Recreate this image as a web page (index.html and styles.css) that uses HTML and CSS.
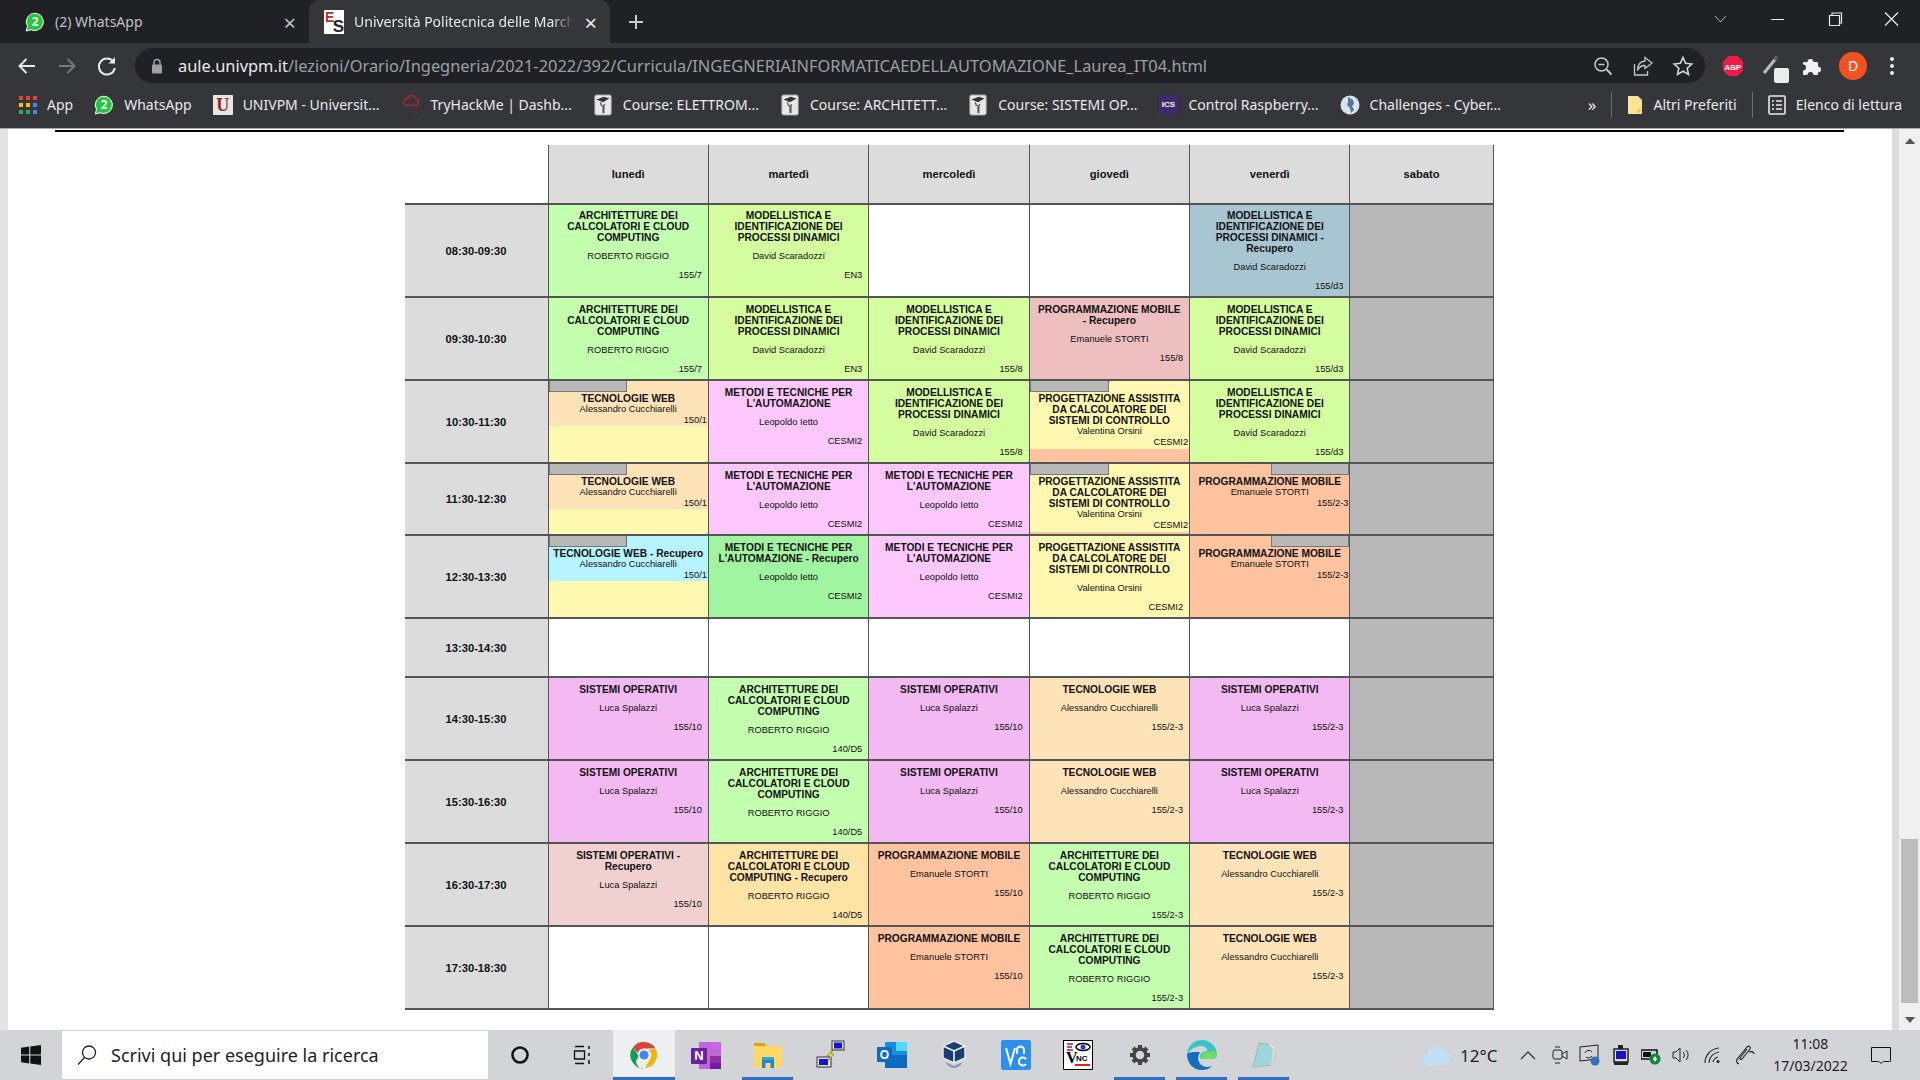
FILE: index.html
```html
<!DOCTYPE html>
<html lang="en">

<head>
  <meta charset="UTF-8">
  <meta name="viewport" content="width=device-width, initial-scale=1.0">
  <title>Orario</title>
  <link rel="stylesheet" href="styles.css">
</head>

<body>

  <svg class="defs" width="0" height="0">
    <symbol id="hat" viewBox="0 0 20 24">
      <rect x="1" y="1" width="18" height="22" rx="2" fill="#e8e8e8" stroke="#9a9a9a"/>
      <path d="M3 6l8-3 6 2-7 4z" fill="#333"/>
      <path d="M7 9l1 3 2 1 0 7 1 0 0-7 1-2" fill="none" stroke="#555" stroke-width="1.300"/>
    </symbol>
  </svg>

  <div class="tabbar">
    <div class="tab">
      <svg class="fav" width="20" height="22" viewBox="0 0 24 24"><path d="M12 1.500a10.400 10.400 0 0 0-9 15.700L1.500 22.800l5.700-1.500A10.400 10.400 0 1 0 12 1.500z" fill="#25c73f" stroke="#fff" stroke-width="1.200"/><text x="12" y="17" class="wa-num">2</text></svg>
      <span class="tab-title">(2) WhatsApp</span>
      <span class="tab-x">×</span>
    </div>
    <div class="tab active">
      <div class="es-logo"><span class="es-e">E</span><span class="es-s">S</span></div>
      <span class="tab-title">Università Politecnica delle March</span>
      <span class="tab-x">×</span>
    </div>
    <svg class="newtab" width="16" height="16" viewBox="0 0 16 16"><path d="M8 1v14M1 8h14" stroke="#c8cacc" stroke-width="2"/></svg>
    <div class="win-btns">
      <svg width="57" height="16" viewBox="0 0 57 16"><path d="M23 5l5.500 6L34 5" fill="none" stroke="#b5b7ba"/></svg>
      <svg width="57" height="16" viewBox="0 0 57 16"><path d="M22 8.500h13" stroke="#e8eaed"/></svg>
      <svg width="57" height="16" viewBox="0 0 57 16"><path d="M23.500 4.500h10v10h-10zM26 4.500V2h9.500v10H33.500" fill="none" stroke="#e8eaed" stroke-width="1.200"/></svg>
      <svg width="57" height="16" viewBox="0 0 57 16"><path d="M22 1.500l13 13M35 1.500l-13 13" stroke="#e8eaed" stroke-width="1.200"/></svg>
    </div>
  </div>

  <div class="toolbar">
    <svg class="nav" width="40" height="24" viewBox="0 0 40 24"><path d="M28 12H13M19.500 5L12.500 12l7 7" fill="none" stroke="#e8eaed" stroke-width="2"/></svg>
    <svg class="nav" width="40" height="24" viewBox="0 0 40 24"><path d="M12 12h15M20.500 5l7 7-7 7" fill="none" stroke="#75777b" stroke-width="2"/></svg>
    <svg class="nav" width="40" height="24" viewBox="0 0 40 24"><path d="M26.500 8a8 8 0 1 0 1.300 6" fill="none" stroke="#e8eaed" stroke-width="2"/><path d="M28 3v6.500h-6.500z" fill="#e8eaed"/></svg>
    <div class="omnibox">
      <svg class="lock" width="12" height="16" viewBox="0 0 12 16"><path d="M3 7V4.500a3 3 0 0 1 6 0V7" fill="none" stroke="#9aa0a6" stroke-width="1.500"/><rect x="1" y="6.500" width="10" height="9" rx="1" fill="#9aa0a6"/></svg>
      <div class="url"><span class="host">aule.univpm.it</span>/lezioni/Orario/Ingegneria/2021-2022/392/Curricula/INGEGNERIAINFORMATICAEDELLAUTOMAZIONE_Laurea_IT04.html</div>
      <div class="omni-icons">
        <svg width="22" height="22" viewBox="0 0 22 22"><circle cx="9.500" cy="9.500" r="6.500" fill="none" stroke="#c4c7cb" stroke-width="1.500"/><path d="M14.500 14.500l5 5" stroke="#c4c7cb" stroke-width="1.800"/><path d="M6.500 9.500h6" stroke="#c4c7cb" stroke-width="1.500"/></svg>
        <svg width="22" height="22" viewBox="0 0 22 22"><path d="M2.500 9v11h13v-4" fill="none" stroke="#c4c7cb" stroke-width="1.300"/><path d="M13 2.500l7 5.500-7 5.500V10.500c-4 0-6 1.500-7.500 5 0-5 2.500-9 7.500-9.500z" fill="none" stroke="#c4c7cb" stroke-width="1.300"/></svg>
        <svg width="22" height="22" viewBox="0 0 22 22"><path d="M11 2.500l2.600 5.800 6.200.7-4.600 4.200 1.300 6.200-5.500-3.200-5.500 3.200 1.300-6.200L2.200 9l6.200-.7z" fill="none" stroke="#d4d6d9" stroke-width="1.600"/></svg>
      </div>
    </div>
    <div class="ext-icons">
      <svg class="ext-abp" width="22" height="22" viewBox="0 0 22 22"><path d="M6.500 1h9L21 6.500v9L15.500 21h-9L1 15.500v-9z" fill="#ee1c46"/><text x="11" y="14.500" class="abp-txt">ABP</text></svg>
      <div class="ext-bat">
        <svg width="26" height="28" viewBox="0 0 26 28"><path d="M1 18L14 2" stroke="#b9bbbe" stroke-width="3"/><path d="M12 5l2-3" stroke="#555" stroke-width="3"/><rect x="11" y="13" width="15" height="15" rx="2" fill="#eceded"/></svg>
      </div>
      <svg class="ext-puzzle" width="22" height="22" viewBox="0 0 22 22"><path d="M3 7h4.500a3 3 0 1 1 6 0H18v4.500a3 3 0 1 1 0 6V20H13.500a3 3 0 1 0-6 0H3v-4.500a3 3 0 1 0 0-6z" fill="#f1f3f4"/></svg>
      <div class="avatar">D</div>
      <div class="menu-dots"><i></i><i></i><i></i></div>
    </div>
  </div>

  <div class="bookmarks">
    <div class="bm"><svg width="18" height="18" viewBox="0 0 18 18"><path d="M0 0h4v4H0z" fill="#ea4335"/><path d="M7 0h4v4H7z" fill="#ea4335"/><path d="M14 0h4v4h-4z" fill="#ea4335"/><path d="M0 7h4v4H0z" fill="#fbbc04"/><path d="M7 7h4v4H7z" fill="#fbbc04"/><path d="M14 7h4v4h-4z" fill="#4285f4"/><path d="M0 14h4v4H0z" fill="#34a853"/><path d="M7 14h4v4H7z" fill="#34a853"/><path d="M14 14h4v4h-4z" fill="#4285f4"/></svg><span>App</span></div>
    <div class="bm"><svg width="20" height="22" viewBox="0 0 24 24"><path d="M12 1.500a10.400 10.400 0 0 0-9 15.700L1.500 22.800l5.700-1.500A10.400 10.400 0 1 0 12 1.500z" fill="#25c73f" stroke="#fff" stroke-width="1.200"/><text x="12" y="17" class="wa-num">2</text></svg><span>WhatsApp</span></div>
    <div class="bm"><div class="u-logo">U</div><span>UNIVPM - Universit...</span></div>
    <div class="bm"><svg width="20" height="22" viewBox="0 0 20 22"><path d="M5 11a3 3 0 0 1 1-6 4.500 4.500 0 0 1 8.500-.5A3.500 3.500 0 0 1 16 11z" fill="none" stroke="#c8202c" stroke-width="1.200"/><path d="M9 13h7v2H9zM11 17h6v2h-6z" fill="#5a2a2c"/></svg><span>TryHackMe | Dashb...</span></div>
    <div class="bm"><svg width="20" height="22"><use href="#hat"/></svg><span>Course: ELETTROM...</span></div>
    <div class="bm"><svg width="20" height="22"><use href="#hat"/></svg><span>Course: ARCHITETT...</span></div>
    <div class="bm"><svg width="20" height="22"><use href="#hat"/></svg><span>Course: SISTEMI OP...</span></div>
    <div class="bm"><div class="ics-logo">ICS</div><span>Control Raspberry...</span></div>
    <div class="bm"><svg width="20" height="22" viewBox="0 0 20 22"><circle cx="10" cy="11" r="9.500" fill="#dbe4ee"/><path d="M8 3l5 3 1 4-2 2 2 4-3 3-1-5-3-3 1-3z" fill="#55779f"/></svg><span>Challenges - Cyber...</span></div>
    <div class="bm-right">
      <span class="more">»</span>
      <i class="bm-sep"></i>
      <div class="bm"><svg width="16" height="20" viewBox="0 0 16 20"><path d="M1 1h10l4 4v14H1z" fill="#fde293"/><path d="M11 19v-5h4z" fill="#f2bd42"/></svg><span>Altri Preferiti</span></div>
      <i class="bm-sep"></i>
      <div class="bm"><svg width="18" height="20" viewBox="0 0 18 20"><rect x="1" y="1" width="16" height="18" rx="1" fill="none" stroke="#e8eaed" stroke-width="1.600"/><path d="M4 6h2M8 6h6M4 10h2M8 10h6M4 14h2M8 14h6" stroke="#e8eaed" stroke-width="1.600"/></svg><span>Elenco di lettura</span></div>
    </div>
  </div>

  <div class="viewport">
    <div class="edge-left"></div>
    <div class="page">
      <div class="rule"></div>
      <table class="orario">
        <colgroup>
          <col class="c-time"><col class="c-day"><col class="c-day"><col class="c-day"><col class="c-day"><col class="c-day"><col class="c-sat">
        </colgroup>
        <tr class="h-head">
          <td class="blank"></td>
          <th>lunedì</th>
          <th>martedì</th>
          <th>mercoledì</th>
          <th>giovedì</th>
          <th>venerdì</th>
          <th>sabato</th>
        </tr>

        <tr class="h-93 first-row">
          <td class="time">08:30-09:30</td>
          <td class="green"><div class="t">ARCHITETTURE DEI CALCOLATORI E CLOUD COMPUTING</div><div class="p">ROBERTO RIGGIO</div><div class="r">155/7</div></td>
          <td class="lime"><div class="t">MODELLISTICA E IDENTIFICAZIONE DEI PROCESSI DINAMICI</div><div class="p">David Scaradozzi</div><div class="r">EN3</div></td>
          <td></td>
          <td></td>
          <td class="steel"><div class="t">MODELLISTICA E IDENTIFICAZIONE DEI PROCESSI DINAMICI - Recupero</div><div class="p">David Scaradozzi</div><div class="r">155/d3</div></td>
          <td class="sat"></td>
        </tr>

        <tr class="h-83">
          <td class="time">09:30-10:30</td>
          <td class="green"><div class="t">ARCHITETTURE DEI CALCOLATORI E CLOUD COMPUTING</div><div class="p">ROBERTO RIGGIO</div><div class="r">155/7</div></td>
          <td class="lime"><div class="t">MODELLISTICA E IDENTIFICAZIONE DEI PROCESSI DINAMICI</div><div class="p">David Scaradozzi</div><div class="r">EN3</div></td>
          <td class="lime"><div class="t">MODELLISTICA E IDENTIFICAZIONE DEI PROCESSI DINAMICI</div><div class="p">David Scaradozzi</div><div class="r">155/8</div></td>
          <td class="rose"><div class="t narrow">PROGRAMMAZIONE MOBILE - Recupero</div><div class="p">Emanuele STORTI</div><div class="r">155/8</div></td>
          <td class="lime"><div class="t">MODELLISTICA E IDENTIFICAZIONE DEI PROCESSI DINAMICI</div><div class="p">David Scaradozzi</div><div class="r">155/d3</div></td>
          <td class="sat"></td>
        </tr>

        <tr class="h-83">
          <td class="time">10:30-11:30</td>
          <td class="yellow"><div class="stack sand"><div class="flag"></div><div class="t">TECNOLOGIE WEB</div><div class="pc">Alessandro Cucchiarelli</div><div class="rc">150/1</div></div></td>
          <td class="violet"><div class="t">METODI E TECNICHE PER L'AUTOMAZIONE</div><div class="p">Leopoldo Ietto</div><div class="r">CESMI2</div></td>
          <td class="lime"><div class="t">MODELLISTICA E IDENTIFICAZIONE DEI PROCESSI DINAMICI</div><div class="p">David Scaradozzi</div><div class="r">155/8</div></td>
          <td class="peach"><div class="stack yellow tail"><div class="flag"></div><div class="t">PROGETTAZIONE ASSISTITA DA CALCOLATORE DEI SISTEMI DI CONTROLLO</div><div class="pc">Valentina Orsini</div><div class="rc">CESMI2</div></div></td>
          <td class="lime"><div class="t">MODELLISTICA E IDENTIFICAZIONE DEI PROCESSI DINAMICI</div><div class="p">David Scaradozzi</div><div class="r">155/d3</div></td>
          <td class="sat"></td>
        </tr>

        <tr class="h-72">
          <td class="time">11:30-12:30</td>
          <td class="yellow"><div class="stack sand"><div class="flag"></div><div class="t">TECNOLOGIE WEB</div><div class="pc">Alessandro Cucchiarelli</div><div class="rc">150/1</div></div></td>
          <td class="violet"><div class="t">METODI E TECNICHE PER L'AUTOMAZIONE</div><div class="p">Leopoldo Ietto</div><div class="r">CESMI2</div></td>
          <td class="violet"><div class="t">METODI E TECNICHE PER L'AUTOMAZIONE</div><div class="p">Leopoldo Ietto</div><div class="r">CESMI2</div></td>
          <td class="peach"><div class="stack yellow tail"><div class="flag"></div><div class="t">PROGETTAZIONE ASSISTITA DA CALCOLATORE DEI SISTEMI DI CONTROLLO</div><div class="pc">Valentina Orsini</div><div class="rc">CESMI2</div></div></td>
          <td class="peach"><div class="stack"><div class="flag right"></div><div class="t">PROGRAMMAZIONE MOBILE</div><div class="pc">Emanuele STORTI</div><div class="rc">155/2-3</div></div></td>
          <td class="sat"></td>
        </tr>

        <tr class="h-83">
          <td class="time">12:30-13:30</td>
          <td class="yellow"><div class="stack sky"><div class="flag"></div><div class="t">TECNOLOGIE WEB - Recupero</div><div class="pc">Alessandro Cucchiarelli</div><div class="rc">150/1</div></div></td>
          <td class="mint"><div class="t">METODI E TECNICHE PER L'AUTOMAZIONE - Recupero</div><div class="p">Leopoldo Ietto</div><div class="r">CESMI2</div></td>
          <td class="violet"><div class="t">METODI E TECNICHE PER L'AUTOMAZIONE</div><div class="p">Leopoldo Ietto</div><div class="r">CESMI2</div></td>
          <td class="yellow"><div class="t">PROGETTAZIONE ASSISTITA DA CALCOLATORE DEI SISTEMI DI CONTROLLO</div><div class="p">Valentina Orsini</div><div class="r">CESMI2</div></td>
          <td class="peach"><div class="stack"><div class="flag right"></div><div class="t">PROGRAMMAZIONE MOBILE</div><div class="pc">Emanuele STORTI</div><div class="rc">155/2-3</div></div></td>
          <td class="sat"></td>
        </tr>

        <tr class="h-59">
          <td class="time">13:30-14:30</td>
          <td></td><td></td><td></td><td></td><td></td>
          <td class="sat"></td>
        </tr>

        <tr class="h-83">
          <td class="time">14:30-15:30</td>
          <td class="purple"><div class="t">SISTEMI OPERATIVI</div><div class="p">Luca Spalazzi</div><div class="r">155/10</div></td>
          <td class="green"><div class="t">ARCHITETTURE DEI CALCOLATORI E CLOUD COMPUTING</div><div class="p">ROBERTO RIGGIO</div><div class="r">140/D5</div></td>
          <td class="purple"><div class="t">SISTEMI OPERATIVI</div><div class="p">Luca Spalazzi</div><div class="r">155/10</div></td>
          <td class="sand"><div class="t">TECNOLOGIE WEB</div><div class="p">Alessandro Cucchiarelli</div><div class="r">155/2-3</div></td>
          <td class="purple"><div class="t">SISTEMI OPERATIVI</div><div class="p">Luca Spalazzi</div><div class="r">155/2-3</div></td>
          <td class="sat"></td>
        </tr>

        <tr class="h-83">
          <td class="time">15:30-16:30</td>
          <td class="purple"><div class="t">SISTEMI OPERATIVI</div><div class="p">Luca Spalazzi</div><div class="r">155/10</div></td>
          <td class="green"><div class="t">ARCHITETTURE DEI CALCOLATORI E CLOUD COMPUTING</div><div class="p">ROBERTO RIGGIO</div><div class="r">140/D5</div></td>
          <td class="purple"><div class="t">SISTEMI OPERATIVI</div><div class="p">Luca Spalazzi</div><div class="r">155/10</div></td>
          <td class="sand"><div class="t">TECNOLOGIE WEB</div><div class="p">Alessandro Cucchiarelli</div><div class="r">155/2-3</div></td>
          <td class="purple"><div class="t">SISTEMI OPERATIVI</div><div class="p">Luca Spalazzi</div><div class="r">155/2-3</div></td>
          <td class="sat"></td>
        </tr>

        <tr class="h-83">
          <td class="time">16:30-17:30</td>
          <td class="blush"><div class="t narrow">SISTEMI OPERATIVI - Recupero</div><div class="p">Luca Spalazzi</div><div class="r">155/10</div></td>
          <td class="gold"><div class="t">ARCHITETTURE DEI CALCOLATORI E CLOUD COMPUTING - Recupero</div><div class="p">ROBERTO RIGGIO</div><div class="r">140/D5</div></td>
          <td class="peach"><div class="t">PROGRAMMAZIONE MOBILE</div><div class="p">Emanuele STORTI</div><div class="r">155/10</div></td>
          <td class="green"><div class="t">ARCHITETTURE DEI CALCOLATORI E CLOUD COMPUTING</div><div class="p">ROBERTO RIGGIO</div><div class="r">155/2-3</div></td>
          <td class="sand"><div class="t">TECNOLOGIE WEB</div><div class="p">Alessandro Cucchiarelli</div><div class="r">155/2-3</div></td>
          <td class="sat"></td>
        </tr>

        <tr class="h-83 last-row">
          <td class="time">17:30-18:30</td>
          <td></td>
          <td></td>
          <td class="peach"><div class="t">PROGRAMMAZIONE MOBILE</div><div class="p">Emanuele STORTI</div><div class="r">155/10</div></td>
          <td class="green"><div class="t">ARCHITETTURE DEI CALCOLATORI E CLOUD COMPUTING</div><div class="p">ROBERTO RIGGIO</div><div class="r">155/2-3</div></td>
          <td class="sand"><div class="t">TECNOLOGIE WEB</div><div class="p">Alessandro Cucchiarelli</div><div class="r">155/2-3</div></td>
          <td class="sat"></td>
        </tr>
      </table>
    </div>
    <div class="edge-right"></div>
    <div class="scrollbar">
      <div class="arrow-up"></div>
      <div class="thumb"></div>
      <div class="arrow-down"></div>
    </div>
  </div>

  <div class="taskbar">
    <div class="start">
      <svg width="20" height="20" viewBox="0 0 20 20"><path d="M0 2.800l8.200-1.200v7.800H0zM9.300 1.500L20 0v9.400H9.300zM0 10.500h8.200v7.900L0 17.200zM9.300 10.500H20V20L9.300 18.500z" fill="#111"/></svg>
    </div>
    <div class="search">
      <svg width="22" height="22" viewBox="0 0 22 22"><circle cx="13" cy="8.500" r="6.500" fill="none" stroke="#222" stroke-width="1.300"/><path d="M8.500 13.500L2 20.500" stroke="#222" stroke-width="1.300"/></svg>
      <span>Scrivi qui per eseguire la ricerca</span>
    </div>
    <div class="tb-tool"><svg width="20" height="20" viewBox="0 0 20 20"><circle cx="10" cy="10" r="7.500" fill="none" stroke="#111" stroke-width="2.600"/></svg></div>
    <div class="tb-tool"><svg width="20" height="20" viewBox="0 0 20 20"><path d="M3 1.500h9M3 18.500h9M2.500 6h10v8h-10z" fill="none" stroke="#111" stroke-width="1.300"/><path d="M17 1v3M17 8v3M17 15v4" stroke="#111" stroke-width="1.500"/></svg></div>

    <div class="slot running lit">
      <svg width="28" height="28" viewBox="0 0 28 28">
        <path d="M14 1a13 13 0 0 1 11.300 6.500H14a6.500 6.500 0 0 0-6.300 5L3.200 6A13 13 0 0 1 14 1z" fill="#db4437"/>
        <path d="M25.300 7.500A13 13 0 0 1 15 27l5.600-9.800A6.500 6.500 0 0 0 19 9.500z" fill="#f4b400"/>
        <path d="M3.200 6l5.600 9.800A6.500 6.500 0 0 0 15 27 13 13 0 0 1 3.200 6z" fill="#0f9d58"/>
        <circle cx="14" cy="14" r="5.800" fill="#fff"/><circle cx="14" cy="14" r="4.600" fill="#4285f4"/>
      </svg>
    </div>
    <div class="slot">
      <svg width="30" height="27" viewBox="0 0 30 27"><rect x="8" y="0" width="22" height="27" fill="#ba6ad8"/><rect x="19" y="0" width="11" height="7" fill="#ca64ea"/><rect x="19" y="14" width="11" height="7" fill="#95309f"/><rect x="19" y="21" width="11" height="6" fill="#7719aa"/><rect x="0" y="6" width="16" height="16" rx="1" fill="#6d1f9e"/><text x="8" y="18" class="n-txt">N</text></svg>
    </div>
    <div class="slot running">
      <svg width="28" height="26" viewBox="0 0 28 26"><path d="M0 1h10l3 3H0z" fill="#e0a21b"/><path d="M0 4h28v22H0z" fill="#ffd966"/><path d="M8 16h12v10h-3.500v-5h-5v5H8z" fill="#1f86d6"/><path d="M9 15h10v3H9z" fill="#29a5e6"/></svg>
    </div>
    <div class="slot">
      <svg width="30" height="30" viewBox="0 0 30 30"><rect x="17" y="1" width="12" height="9" fill="#e6e6e6" stroke="#333"/><rect x="19" y="2.500" width="8" height="6" fill="#1414d0"/><rect x="2" y="17" width="14" height="10" fill="#e6e6e6" stroke="#333"/><rect x="4" y="19" width="9" height="6" fill="#1414d0"/><path d="M17 10l-5 6 3 0-3 6 7-8h-3l2-4z" fill="#f0e020" stroke="#555" stroke-width=".5"/></svg>
    </div>
    <div class="slot">
      <svg width="30" height="30" viewBox="0 0 30 30"><rect x="8" y="2" width="22" height="26" rx="1" fill="#1490df"/><path d="M19 2h11v9H19z" fill="#50d9ff"/><path d="M8 15l22 0v13H8z" fill="#0a6bc0"/><rect x="0" y="7" width="15" height="15" rx="1" fill="#0f6cbd"/><text x="7.500" y="18.500" class="o-txt">O</text></svg>
    </div>
    <div class="slot">
      <svg width="26" height="30" viewBox="0 0 26 30"><path d="M13 1l11 5v12L13 23 2 18V6z" fill="#1a3f6f" stroke="#e6e8ee" stroke-width="1.500"/><path d="M2 6l11 5 11-5M13 11v12" fill="none" stroke="#fff" stroke-width="1.500"/><path d="M4 22c3 4 6 6 9 6s6-2 9-6l-9 4z" fill="#8a94ab"/></svg>
    </div>
    <div class="slot">
      <svg width="30" height="30" viewBox="0 0 30 30"><rect width="30" height="30" rx="2" fill="#2b8ff0"/><path d="M5 8l4.500 16L14 8M16 14v-4a3 3 0 0 1 7 0v4" fill="none" stroke="#fff" stroke-width="2"/><path d="M25 19a4 4 0 1 0 0 5" fill="none" stroke="#fff" stroke-width="2"/></svg>
    </div>
    <div class="slot">
      <svg width="30" height="30" viewBox="0 0 30 30"><rect x=".5" y=".5" width="29" height="29" fill="#fff" stroke="#000"/><path d="M4 4h6M4 7h5M4 10h6" stroke="#a02030" stroke-width="1.500"/><ellipse cx="20" cy="7" rx="7" ry="3.500" fill="none" stroke="#000" stroke-width="1.500"/><circle cx="20" cy="7" r="2.500" fill="#1a3fd0"/><text x="3" y="23" class="vnc-v">V</text><text x="13" y="21" class="vnc-nc">NC</text><rect x="12" y="24" width="15" height="2" fill="#e02020"/></svg>
    </div>
    <div class="slot running">
      <svg width="24" height="24" viewBox="0 0 24 24"><path d="M12 2v3M12 19v3M2 12h3M19 12h3M5 5l2 2M17 17l2 2M19 5l-2 2M7 17l-2 2" stroke="#444" stroke-width="4"/><circle cx="12" cy="12" r="6" fill="none" stroke="#444" stroke-width="3.500"/></svg>
    </div>
    <div class="slot running">
      <svg width="30" height="30" viewBox="0 0 30 30"><path d="M15 0a15 15 0 0 1 15 15c0 3-3 4-6 4H13c-1-4 2-8 7-8 1 0 0-5-6-5C8 6 3 10 0 14 1 6 7 0 15 0z" fill="#37c4c8"/><path d="M0 14c0 9 6 16 15 16 4 0 7-1 10-4-5 2-11 1-13-4-2-4 0-8 1-10-7 0-11 0-13 2z" fill="#0f6fc0"/><path d="M24 11c3 0 6 1 6 4 0 2-3 4-6 4H13c-.5-4 4-8 11-8z" fill="#6fdc6a"/></svg>
    </div>
    <div class="slot running">
      <svg width="28" height="28" viewBox="0 0 28 28"><path d="M9 2l17 2-3 20-20 2z" fill="#9fd6dc" stroke="#8a9a9c" stroke-width=".5"/><path d="M19 3l7 1-1 6z" fill="#eee"/><path d="M23 4l3 1-3 20h-2z" fill="#d8d8d8"/></svg>
    </div>

    <div class="tray">
      <svg class="tray-cloud" width="28" height="22" viewBox="0 0 28 22"><path d="M6 21a5.500 5.500 0 0 1-1-11 8 8 0 0 1 15-4 6.500 6.500 0 0 1 2 15z" fill="#bfe0f5"/></svg>
      <span class="temp">12°C</span>
      <svg class="tray-chev" width="16" height="10" viewBox="0 0 16 10"><path d="M1 9l7-7 7 7" fill="none" stroke="#222" stroke-width="1.200"/></svg>
      <svg class="tray-ic" width="16" height="20" viewBox="0 0 16 20"><rect x="1" y="5" width="9" height="9" rx="2" fill="none" stroke="#222"/><path d="M10 9l5-3v8l-5-3" fill="none" stroke="#222"/><path d="M3 2h5M3 18h5" stroke="#222"/></svg>
      <svg class="tray-ic" width="22" height="22" viewBox="0 0 22 22"><path d="M1 3l18-2v14l-18 2z" fill="none" stroke="#222"/><path d="M6 9a4 4 0 0 1 7-1M13 12a4 4 0 0 1-6 1" fill="none" stroke="#222"/><circle cx="16" cy="17" r="4.500" fill="#2e72c6"/></svg>
      <svg class="tray-ic" width="18" height="22" viewBox="0 0 18 22"><path d="M6 1h5v4H6z" fill="#222"/><rect x="2" y="5" width="14" height="13" fill="#ddd" stroke="#222" stroke-width="1.500"/><rect x="4" y="7" width="10" height="8" fill="#1414d0"/><path d="M2 18h14v3H2z" fill="#222"/></svg>
      <svg class="tray-ic" width="20" height="22" viewBox="0 0 20 22"><rect x="0" y="6" width="16" height="9" fill="none" stroke="#111" stroke-width="1.500"/><rect x="2" y="8" width="8" height="5" fill="#111"/><circle cx="14" cy="15" r="5.500" fill="#0b8a36"/><path d="M14 12l2 3-2 3-2-3z" fill="#fff"/></svg>
      <svg class="tray-ic" width="20" height="20" viewBox="0 0 20 20"><path d="M1 7h3l4-4v14l-4-4H1z" fill="none" stroke="#222"/><path d="M11 7a4 4 0 0 1 0 6M14 5a7 7 0 0 1 0 10" fill="none" stroke="#222"/></svg>
      <svg class="tray-ic" width="20" height="18" viewBox="0 0 20 18"><path d="M2 17A15 15 0 0 1 16 2M6 17A11 11 0 0 1 16 6M10 16a7 7 0 0 1 5-5" fill="none" stroke="#333" stroke-width="1.200"/><circle cx="15" cy="15.500" r="1.500" fill="#222"/></svg>
      <svg class="tray-ic" width="22" height="22" viewBox="0 0 22 22"><path d="M5 20c-3-1-3-4-1-6l9-11c2-2 4 0 3 2l-8 10c-1 1-3 0-2-1l7-9M15 8c3-1 5 0 5 2" fill="none" stroke="#222" stroke-width="1.100"/></svg>
      <div class="clock"><span>11:08</span><span>17/03/2022</span></div>
      <svg class="tray-note" width="20" height="20" viewBox="0 0 20 20"><path d="M.5 2.500h19v14H12l-2 2-2-2H.5z" fill="none" stroke="#111"/></svg>
    </div>
  </div>

</body>

</html>
```

FILE: styles.css
```css
* {
  box-sizing: border-box;
}

body {
  margin: 0;
  height: 1080px;
  overflow: hidden;
  display: flex;
  flex-direction: column;
  background-color: white;
  font-family: "Liberation Sans", Arial, sans-serif;
}

.defs {
  position: absolute;
}

.wa-num {
  font: bold 14px "Noto Sans", sans-serif;
  fill: white;
  text-anchor: middle;
}

/* browser chrome */
.tabbar {
  height: 43px;
  display: flex;
  align-items: stretch;
  background-color: #202124;
  font-family: "Noto Sans", sans-serif;
  font-size: 14px;
  color: #bdc1c6;
}

.tab {
  width: 309px;
  display: flex;
  align-items: center;
  padding-left: 25px;
  padding-right: 13px;
  gap: 10px;
}

.tab.active {
  width: 301px;
  padding-left: 15px;
  background-color: #35363a;
  border-radius: 10px 10px 0 0;
  color: #e8eaed;
}

.tab-title {
  flex: 1;
  white-space: nowrap;
  overflow: hidden;
}

.tab.active .tab-title {
  -webkit-mask-image: linear-gradient(to right, black 90%, transparent 100%);
  mask-image: linear-gradient(to right, black 90%, transparent 100%);
}

.tab-x {
  font-size: 22px;
  line-height: 20px;
}

.es-logo {
  width: 20px;
  height: 24px;
  background-color: white;
  position: relative;
  font: bold 14px/14px "Liberation Sans", sans-serif;
}

.es-e {
  color: #a33;
  position: absolute;
  left: 1px;
  top: 0;
}

.es-s {
  color: #222;
  position: absolute;
  right: 0;
  bottom: 0;
  font-size: 17px;
}

.newtab {
  align-self: center;
  margin-left: 18px;
}

.win-btns {
  margin-left: auto;
  display: flex;
  align-items: center;
  padding-bottom: 6px;
}

.toolbar {
  height: 40px;
  display: flex;
  align-items: flex-start;
  padding: 5px 0 0 7px;
  background-color: #35363a;
}

.nav {
  margin-top: 6px;
}

.omnibox {
  width: 1570px;
  height: 35px;
  margin-left: 8px;
  padding-left: 16px;
  display: flex;
  align-items: center;
  background-color: #202124;
  border-radius: 18px;
}

.url {
  margin-left: 15px;
  font-family: "Noto Sans", sans-serif;
  font-size: 16.4px;
  color: #9aa0a6;
  white-space: nowrap;
}

.host {
  color: #e8eaed;
}

.omni-icons {
  margin-left: auto;
  display: flex;
  gap: 18px;
  padding-right: 11px;
}

.ext-icons {
  flex: 1;
  height: 35px;
  display: flex;
  align-items: center;
}

.ext-abp {
  margin-left: 17px;
}

.abp-txt {
  font: bold 8px "Liberation Sans", sans-serif;
  fill: white;
  text-anchor: middle;
}

.ext-bat {
  height: 28px;
  margin-left: 19px;
  margin-top: 6px;
}

.ext-puzzle {
  margin-left: 11px;
}

.avatar {
  width: 28px;
  height: 28px;
  margin-left: 17px;
  border-radius: 50%;
  background-color: #f4511e;
  color: white;
  font: 14px/28px "Noto Sans", sans-serif;
  text-align: center;
}

.menu-dots {
  margin-left: 23px;
  display: flex;
  flex-direction: column;
  gap: 3px;
}

.menu-dots i {
  width: 4px;
  height: 4px;
  border-radius: 50%;
  background-color: #e8eaed;
}

.bookmarks {
  height: 46px;
  display: flex;
  align-items: center;
  gap: 21px;
  padding: 0 18px 2px 19px;
  background-color: #35363a;
  border-bottom: 1px solid #a9aaad;
  font-family: "Noto Sans", sans-serif;
  font-size: 14px;
  color: #e8eaed;
  white-space: nowrap;
}

.bm {
  display: flex;
  align-items: center;
  gap: 10px;
}

.u-logo {
  width: 20px;
  height: 20px;
  background-color: #e6e6e6;
  color: #a2222a;
  font: bold 18px/20px "Liberation Serif", serif;
  text-align: center;
}

.ics-logo {
  width: 20px;
  height: 20px;
  background-color: #3f2a6e;
  color: white;
  font: bold 8px/20px "Liberation Sans", sans-serif;
  text-align: center;
}

.bm-right {
  margin-left: auto;
  display: flex;
  align-items: center;
  gap: 15px;
}

.more {
  font-size: 17px;
  line-height: 20px;
}

.bm-sep {
  width: 1px;
  height: 26px;
  background-color: #6a6e73;
}

/* page */
.viewport {
  flex: 1;
  min-height: 0;
  display: flex;
}

.edge-left {
  width: 8px;
  background-color: #e4e4e4;
}

.page {
  flex: 1;
  min-width: 0;
  padding-right: 2px;
}

.rule {
  height: 2px;
  margin: 1px 46px 0 47px;
  background-color: black;
}

.edge-right {
  width: 7px;
  background-color: #dcdcdc;
}

.scrollbar {
  width: 21px;
  background-color: #f0f0f0;
  display: flex;
  flex-direction: column;
  align-items: center;
}

.arrow-up {
  margin-top: 9px;
  border: 5px solid transparent;
  border-top: 0;
  border-bottom: 6px solid #555;
}

.thumb {
  width: 17px;
  height: 164px;
  margin-top: auto;
  background-color: #bdbdbd;
}

.arrow-down {
  margin: 14px 0 7px;
  border: 5px solid transparent;
  border-bottom: 0;
  border-top: 6px solid #555;
}

/* timetable */
.orario {
  width: 1089px;
  margin: 13px auto 0;
  border-collapse: separate;
  border-spacing: 0;
  table-layout: fixed;
  font-size: 11px;
  color: #111;
}

.c-time {
  width: 143px;
}

.c-day {
  width: 160.4px;
}

.c-sat {
  width: 144px;
}

.orario td,
.orario th {
  padding: 0;
  border-top: 2px solid #555;
  border-left: 1px solid #555;
  vertical-align: top;
}

.orario th {
  border-top: 0;
  background-color: #dcdcdc;
  font-size: 11.2px;
  font-weight: bold;
  vertical-align: middle;
}

.orario th:last-child,
.orario td:last-child {
  border-right: 1px solid #555;
}

.orario td.blank {
  border: 0;
}

.orario td.time {
  border-left: 0;
  background-color: #dcdcdc;
  font-size: 11.2px;
  font-weight: bold;
  text-align: center;
  vertical-align: middle;
}

.last-row td {
  border-bottom: 2px solid #555;
}

.h-head {
  height: 58px;
}

.h-93 {
  height: 93px;
}

.h-83 {
  height: 83px;
}

.h-72 {
  height: 72px;
}

.h-59 {
  height: 59px;
}

.last-row {
  height: 85px;
}

.t {
  padding: 5.5px 3px 0;
  font-size: 10.2px;
  font-weight: bold;
  line-height: 11px;
  text-align: center;
}

.t.narrow {
  padding-left: 6px;
  padding-right: 6px;
}

.first-row .t {
  padding-top: 4.5px;
}

.p {
  margin-top: 8.5px;
  font-size: 9.3px;
  line-height: 11px;
  text-align: center;
}

.r {
  margin-top: 8px;
  padding-right: 6px;
  font-size: 9.3px;
  line-height: 11px;
  text-align: right;
}

.stack .t {
  padding: 1px 2px 0;
}

.pc {
  font-size: 9.3px;
  line-height: 11px;
  text-align: center;
}

.rc {
  padding-right: 1px;
  font-size: 9.3px;
  line-height: 11px;
  text-align: right;
}

.flag {
  width: 49.5%;
  height: 11px;
  background-color: #b8b8b8;
  border-right: 1px solid #777;
  border-bottom: 1px solid #777;
  border-left: 1px solid #777;
}

.flag.right {
  margin-left: auto;
}

.tail {
  padding-bottom: 1px;
}

.green { background-color: #c4ffb0; }
.lime { background-color: #d5ff9f; }
.steel { background-color: #a8c6d2; }
.rose { background-color: #eebfc0; }
.yellow { background-color: #fff8b0; }
.sand { background-color: #ffe3b8; }
.violet { background-color: #fdc8fd; }
.peach { background-color: #ffc3a0; }
.sky { background-color: #b6f4ff; }
.mint { background-color: #a0f5a0; }
.purple { background-color: #f3b9f3; }
.blush { background-color: #f0d1d0; }
.gold { background-color: #ffe4a5; }
.orario td.sat { background-color: #b8b8b8; }

/* windows taskbar */
.taskbar {
  height: 50px;
  display: flex;
  align-items: stretch;
  background-color: #d3d4d8;
  font-family: "Noto Sans", sans-serif;
  color: #222;
}

.start {
  width: 61px;
  display: flex;
  align-items: center;
  justify-content: center;
}

.search {
  width: 428px;
  display: flex;
  align-items: center;
  gap: 13px;
  padding-left: 14px;
  background-color: white;
  border: 1px solid #cfd0d2;
  font-size: 18px;
}

.tb-tool {
  width: 62px;
  display: flex;
  align-items: center;
  justify-content: center;
}

.slot {
  width: 62px;
  display: flex;
  align-items: center;
  justify-content: center;
  position: relative;
}

.slot.lit {
  background-color: #eeeff1;
}

.slot.running::after {
  content: "";
  position: absolute;
  left: 5px;
  right: 6px;
  bottom: 0;
  height: 3px;
  background-color: #2b6fc7;
}

.slot.lit::after {
  left: 0;
  right: 0;
}

.n-txt {
  font: bold 13px "Liberation Sans", sans-serif;
  fill: white;
  text-anchor: middle;
}

.o-txt {
  font: bold 12px "Liberation Sans", sans-serif;
  fill: white;
  text-anchor: middle;
}

.vnc-v {
  font: bold 16px "Liberation Serif", serif;
  fill: black;
}

.vnc-nc {
  font: bold 8px "Liberation Sans", sans-serif;
  fill: black;
}

.tray {
  flex: 1;
  display: flex;
  align-items: center;
  padding-left: 127px;
}

.temp {
  margin-left: 10px;
  font-size: 17px;
}

.tray-chev {
  margin-left: 23px;
  margin-right: 10px;
}

.tray-ic {
  margin: 0 5.5px;
}

.clock {
  width: 90px;
  margin-left: 4px;
  display: flex;
  flex-direction: column;
  align-items: center;
  font-size: 14px;
  line-height: 22px;
}

.tray-note {
  margin-left: 16px;
}
```
